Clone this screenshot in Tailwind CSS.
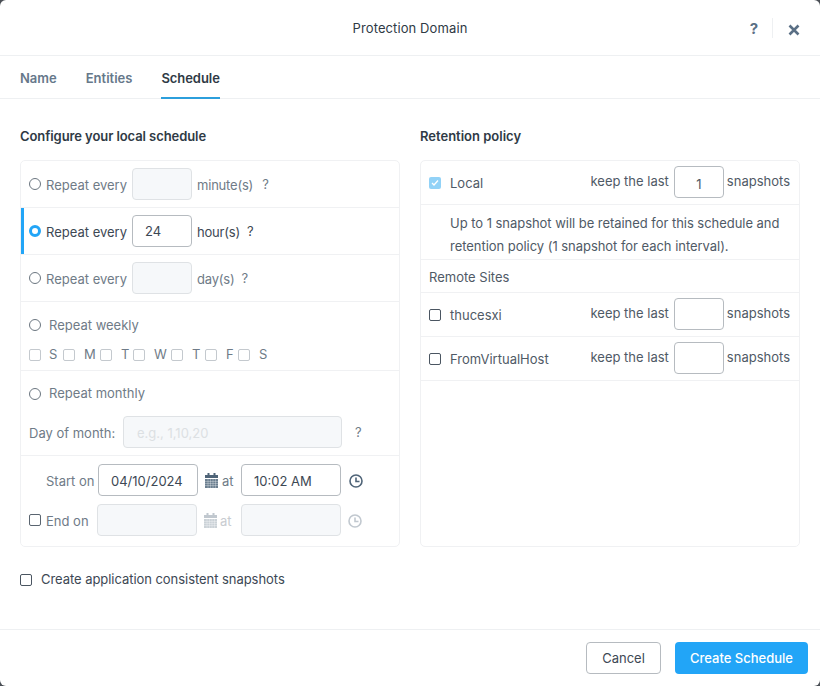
<!DOCTYPE html>
<html>
<head>
<meta charset="utf-8">
<script src="https://cdn.jsdelivr.net/npm/@tailwindcss/browser@4"></script>
</head>
<body class="m-0 bg-[#4a4f55]">
<div class="w-[820px] h-[686px] bg-white rounded-[6px] overflow-hidden flex flex-col font-['Inter',sans-serif] text-[13px] text-[#4a5561]">
  <header class="h-[56px] shrink-0 border-b border-[#eef0f2] relative flex items-center justify-center">
    <span class="text-[#2f3a45] text-[13px] tracking-[0.1px] mt-[3px]">Protection Domain</span>
    <div class="absolute right-0 top-0 h-[56px] flex items-center">
      <span class="font-bold text-[15px] text-[#5a6f85] w-[12px] text-center mt-[3px]">?</span>
      <span class="w-px h-[20px] bg-[#eef0f2] ml-[12px] mr-[15px]"></span>
      <svg class="w-[12px] h-[12px] mr-[20px] mt-[3px]" viewBox="0 0 12 12"><path d="M1.500 1.500l9 9M10.500 1.500l-9 9" stroke="#5a6f85" stroke-width="2.600"/></svg>
    </div>
  </header>
  <nav class="h-[43px] shrink-0 border-b border-[#eef0f2] flex pl-[20px] gap-[29px] font-semibold text-[13px] text-[#66788a]">
    <span class="pt-[13px]">Name</span>
    <span class="pt-[13px]">Entities</span>
    <span class="pt-[13px] h-[43px] border-b-2 border-[#2c9fdc] text-[#2f3a45] tracking-[-0.05px]">Schedule</span>
  </nav>
  <main class="flex-1 flex gap-[20px] px-[20px] pt-[28px] relative">
    <section class="w-[380px]">
      <h2 class="font-semibold text-[13px] text-[#2f3a45] h-[33px] leading-[18px] tracking-[-0.08px]">Configure your local schedule</h2>
      <div class="h-[387px] border border-[#f0f1f3] rounded-[5px] flex flex-col">
        <div class="h-[47px] pl-[8px] flex items-center border-b border-[#f0f1f3] text-[#6f7b87]">
          <span class="w-[12px] h-[12px] rounded-full border border-[#6b7680] mr-[5px]"></span>
          <span class="w-[86px] mt-[3px]">Repeat every</span>
          <span class="w-[60px] h-[32px] rounded-[4px] border border-[#dfe2e5] bg-[#f6f8fa] mr-[5px]"></span>
          <span class="mt-[3px] tracking-[-0.2px]">minute(s)</span><span class="ml-[9px] mt-[1px]">?</span>
        </div>
        <div class="h-[47px] pl-[8px] flex items-center border-b border-[#f0f1f3] relative text-[#3d4854]">
          <span class="absolute left-0 top-0 bottom-[0] w-[3px] bg-[#22a5f7]"></span>
          <span class="w-[12px] h-[12px] rounded-full border-[3.5px] border-[#22a5f7] bg-white mr-[5px]"></span>
          <span class="w-[86px] mt-[3px]">Repeat every</span>
          <span class="w-[60px] h-[32px] rounded-[4px] border border-[#b6bbc0] bg-white mr-[5px] pl-[12px] leading-[30px]">24</span>
          <span class="mt-[3px] tracking-[-0.2px]">hour(s)</span><span class="ml-[7px] mt-[1px]">?</span>
        </div>
        <div class="h-[47px] pl-[8px] flex items-center border-b border-[#f0f1f3] text-[#6f7b87]">
          <span class="w-[12px] h-[12px] rounded-full border border-[#6b7680] mr-[5px]"></span>
          <span class="w-[86px] mt-[3px]">Repeat every</span>
          <span class="w-[60px] h-[32px] rounded-[4px] border border-[#dfe2e5] bg-[#f6f8fa] mr-[5px]"></span>
          <span class="mt-[3px] tracking-[-0.2px]">day(s)</span><span class="ml-[7px] mt-[1px]">?</span>
        </div>
        <div class="h-[69px] pl-[8px] border-b border-[#f0f1f3] text-[#6f7b87]">
          <div class="flex items-center h-[18px] mt-[14px]">
            <span class="w-[12px] h-[12px] rounded-full border border-[#6b7680] mr-[8px] -mt-[1px]"></span>
            <span class="mt-[1px]">Repeat weekly</span>
          </div>
          <div class="flex items-center h-[18px] mt-[12px] relative">
            <span class="w-[12px] h-[12px] rounded-[2px] border border-[#c4c9ce] mr-[8px]"></span><span class="w-[14px]">S</span>
            <span class="w-[12px] h-[12px] rounded-[2px] border border-[#c4c9ce] mr-[9px]"></span><span class="w-[16px]">M</span>
            <span class="w-[12px] h-[12px] rounded-[2px] border border-[#c4c9ce] mr-[9px]"></span><span class="w-[12px]">T</span>
            <span class="w-[12px] h-[12px] rounded-[2px] border border-[#c4c9ce] mr-[9px]"></span><span class="w-[17px]">W</span>
            <span class="w-[12px] h-[12px] rounded-[2px] border border-[#c4c9ce] mr-[9px]"></span><span class="w-[13px]">T</span>
            <span class="w-[12px] h-[12px] rounded-[2px] border border-[#c4c9ce] mr-[9px]"></span><span class="w-[12px]">F</span>
            <span class="w-[12px] h-[12px] rounded-[2px] border border-[#c4c9ce] mr-[9px]"></span><span>S</span>
          </div>
        </div>
        <div class="h-[85px] pl-[8px] border-b border-[#f0f1f3] text-[#6f7b87]">
          <div class="flex items-center h-[18px] mt-[14px]">
            <span class="w-[12px] h-[12px] rounded-full border border-[#6b7680] mr-[8px] -mt-[1px]"></span>
            <span>Repeat monthly</span>
          </div>
          <div class="flex items-center mt-[13px]">
            <span class="w-[94px] mt-[3px]">Day of month:</span>
            <span class="w-[219px] h-[32px] rounded-[4px] border border-[#dfe2e5] bg-[#f6f8fa] pl-[13px] leading-[32px] text-[#dce0e3]">e.g., 1,10,20</span>
            <span class="ml-[13px] mt-[1px]">?</span>
          </div>
        </div>
        <div class="flex-1 text-[#6f7b87]">
          <div class="flex items-center mt-[8px] h-[32px]">
            <span class="ml-[25px] w-[52px] mt-[3px]">Start on</span>
            <span class="w-[100px] h-[32px] rounded-[4px] border border-[#b6bbc0] bg-white pl-[12px] leading-[32px] text-[#3d4854]">04/10/2024</span>
            <svg class="ml-[7px] w-[13px] h-[15px]" viewBox="0 0 13 15"><path fill="#4f6478" d="M0 2h2.500V0h2v2h4V0h2v2H13v3H0z"/><path fill="#6c7f90" d="M0 6h13v9H0z"/><path stroke="#fff" stroke-width=".5" stroke-opacity=".6" d="M0 8.500h13M0 10.500h13M0 12.500h13M3 6v9M5.500 6v9M8 6v9M10.500 6v9"/></svg>
            <span class="ml-[4px] w-[11px] mt-[3px]">at</span>
            <span class="ml-[8px] w-[100px] h-[32px] rounded-[4px] border border-[#b6bbc0] bg-white pl-[12px] leading-[32px] text-[#3d4854]">10:02 AM</span>
            <svg class="ml-[8px] w-[14px] h-[14px] mt-[2px]" viewBox="0 0 14 14" fill="none"><circle cx="7" cy="7" r="6" stroke="#4f6478" stroke-width="1.600"/><path d="M7 3.500V7.500H10.500" stroke="#4f6478" stroke-width="1.600"/></svg>
          </div>
          <div class="flex items-center mt-[8px] h-[32px] pl-[8px]">
            <span class="w-[12px] h-[12px] rounded-[2px] border border-[#5a6570] mr-[5px]"></span>
            <span class="w-[51px] mt-[3px]">End on</span>
            <span class="w-[100px] h-[32px] rounded-[4px] border border-[#dfe2e5] bg-[#f6f8fa]"></span>
            <svg class="ml-[7px] w-[13px] h-[15px] opacity-35" viewBox="0 0 13 15"><path fill="#4f6478" d="M0 2h2.500V0h2v2h4V0h2v2H13v3H0z"/><path fill="#6c7f90" d="M0 6h13v9H0z"/><path stroke="#fff" stroke-width=".5" stroke-opacity=".6" d="M0 8.500h13M0 10.500h13M0 12.500h13M3 6v9M5.500 6v9M8 6v9M10.500 6v9"/></svg>
            <span class="ml-[3px] w-[12px] mt-[3px] text-[#c8ccd1]">at</span>
            <span class="ml-[9px] w-[100px] h-[32px] rounded-[4px] border border-[#dfe2e5] bg-[#f6f8fa]"></span>
            <svg class="ml-[7px] w-[14px] h-[14px] opacity-35 mt-[2px]" viewBox="0 0 14 14" fill="none"><circle cx="7" cy="7" r="6" stroke="#4f6478" stroke-width="1.600"/><path d="M7 3.500V7.500H10.500" stroke="#4f6478" stroke-width="1.600"/></svg>
          </div>
        </div>
      </div>
      <div class="flex items-center mt-[24px] h-[18px] text-[#3d4854]">
        <span class="w-[12px] h-[12px] rounded-[2px] border border-[#4a5561] mr-[9px]"></span>
        <span class="tracking-[-0.05px]">Create application consistent snapshots</span>
      </div>
    </section>
    <section class="w-[380px]">
      <h2 class="font-semibold text-[13px] text-[#2f3a45] h-[33px] leading-[18px]">Retention policy</h2>
      <div class="h-[387px] border border-[#f0f1f3] rounded-[5px] flex flex-col text-[#4f5a66]">
        <div class="h-[44px] flex items-center border-b border-[#f0f1f3] pl-[8px] pr-[9px]">
          <span class="w-[12px] h-[12px] rounded-[2px] bg-[#92d2f7] flex items-center justify-center mr-[9px] ">
            <svg class="w-[8px] h-[8px]" viewBox="0 0 8 8" fill="none"><path d="M1 4l2 2 4-4.500" stroke="#fff" stroke-width="1.300"/></svg>
          </span>
          <span class="flex-1 mt-[3px]">Local</span>
          <span class="-mt-[1px]">keep the last</span>
          <span class="w-[50px] h-[32px] rounded-[4px] border border-[#b6bbc0] ml-[5px] mr-[3px] -mt-[2px] text-center leading-[34px]">1</span>
          <span class="-mt-[1px]">snapshots</span>
        </div>
        <div class="h-[55px] border-b border-[#f0f1f3] pl-[29px] pt-[7px] leading-[23px] tracking-[-0.04px]">
          Up to 1 snapshot will be retained for this schedule and<br>retention policy (1 snapshot for each interval).
        </div>
        <div class="h-[33px] border-b border-[#f0f1f3] pl-[8px] flex items-center"><span class="mt-[3px]">Remote Sites</span></div>
        <div class="h-[44px] flex items-center border-b border-[#f0f1f3] pl-[8px] pr-[9px]">
          <span class="w-[12px] h-[12px] rounded-[2px] border border-[#4a5561] mr-[9px]"></span>
          <span class="flex-1 mt-[3px]">thucesxi</span>
          <span class="-mt-[1px]">keep the last</span>
          <span class="w-[50px] h-[32px] rounded-[4px] border border-[#b6bbc0] ml-[5px] mr-[3px] -mt-[2px]"></span>
          <span class="-mt-[1px]">snapshots</span>
        </div>
        <div class="h-[44px] flex items-center border-b border-[#f0f1f3] pl-[8px] pr-[9px]">
          <span class="w-[12px] h-[12px] rounded-[2px] border border-[#4a5561] mr-[9px]"></span>
          <span class="flex-1 mt-[3px]">FromVirtualHost</span>
          <span class="-mt-[1px]">keep the last</span>
          <span class="w-[50px] h-[32px] rounded-[4px] border border-[#b6bbc0] ml-[5px] mr-[3px] -mt-[2px]"></span>
          <span class="-mt-[1px]">snapshots</span>
        </div>
      </div>
    </section>
  </main>
  <footer class="h-[57px] shrink-0 border-t border-[#eef0f2] flex items-center justify-end pr-[12px] gap-[14px] pb-[1px]">
    <button class="w-[75px] h-[32px] rounded-[4px] border border-[#b6bbc0] bg-white text-[#3d4854] text-[13px]"><span class="relative top-[1px]">Cancel</span></button>
    <button class="w-[133px] h-[32px] rounded-[4px] bg-[#22a5f7] text-white text-[13px] font-medium"><span class="relative top-[1px]">Create Schedule</span></button>
  </footer>
</div>
</body>
</html>
